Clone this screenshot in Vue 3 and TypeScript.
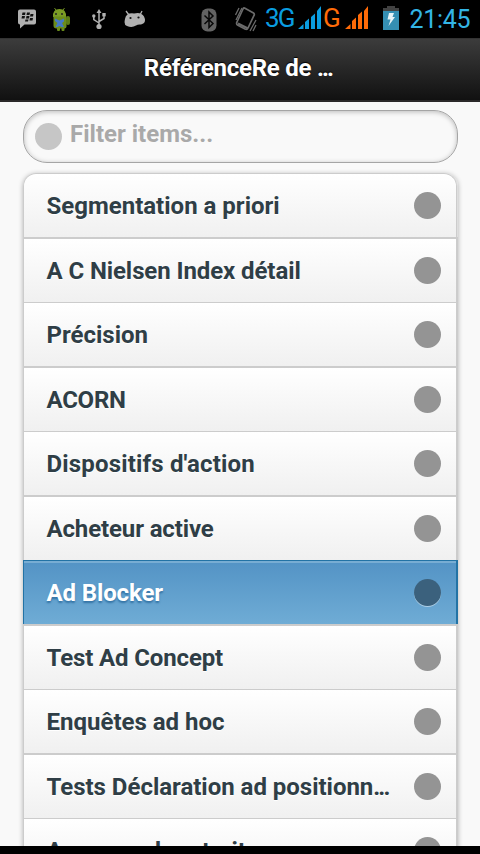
<script setup lang="ts">
interface Item {
  label: string
  tracking: number
  active?: boolean
  clipped?: boolean
}

const items: Item[] = [
  { label: 'Segmentation a priori', tracking: 0 },
  { label: 'A C Nielsen Index détail', tracking: -0.09 },
  { label: 'Précision', tracking: 0 },
  { label: 'ACORN', tracking: -0.25 },
  { label: "Dispositifs d'action", tracking: 0.17 },
  { label: 'Acheteur active', tracking: -0.13 },
  { label: 'Ad Blocker', tracking: -0.12, active: true },
  { label: 'Test Ad Concept', tracking: -0.13 },
  { label: 'Enquêtes ad hoc', tracking: 0 },
  { label: 'Tests Déclaration ad positionn', tracking: -0.02, clipped: true },
  { label: 'Annonce du retrait', tracking: 0 },
]
</script>

<template>
  <div class="screen">
    <div class="status">
      <svg class="ic bbm" width="20" height="20" viewBox="0 0 20 20">
        <path d="M3 0.5h14q2 0 2 2v11q0 2-2 2H7.500L3 19.500v-4q-2 0-2-2v-11q0-2 2-2z" fill="#b0b0b0" />
        <path d="M5.500 3.500h3l-.5 2.500H5zM10 3.500h3l-.5 2.500h-3zM5 7h3l-.5 2.500h-3zM9.500 7h3L12 9.500H9zM13.500 5h3L16 7.500h-3zM8.500 10.500h3L11 12.500H8zM13 9h3l-.5 2.500h-3z" fill="#111" />
      </svg>
      <svg class="ic droid" width="19" height="25" viewBox="0 0 19 25">
        <path d="M2.500 1l2 3M12.500 1l-2 3" stroke="#6d8c20" stroke-width="1" />
        <path d="M1 10Q.5 2 7.500 2T14 10z" fill="#7b9c25" />
        <path d="M1.500 9.500h13v10q0 2-2 2h-8q-3 0-3-3z" fill="#6b8c1c" />
        <rect x="14" y="9" width="4" height="9" rx="2" fill="#5d7c18" />
        <rect x="5" y="19" width="3" height="5" rx="1" fill="#6b8c1c" />
        <rect x="9.500" y="19" width="3" height="5" rx="1" fill="#6b8c1c" />
        <circle cx="4" cy="7" r="1" fill="#222" />
        <circle cx="10" cy="7" r="1" fill="#222" />
        <path d="M3 11.500l4.500 2 4.500-2v3l-2 1.500 2 4H9.500l-2-1-2 1H3.500l2-4-2.500-2z" fill="#4579c5" />
      </svg>
      <svg class="ic usb" width="14" height="21" viewBox="0 0 14 21" fill="none" stroke="#b0b0b0" stroke-width="1.500">
        <path d="M7 3v15M1.800 6v4.500L7 14M12 5v4.500L7 12.500" />
        <path d="M4.500 4L7 0l2.500 4z" fill="#b0b0b0" stroke="none" />
        <circle cx="7" cy="17.500" r="2.600" fill="#b0b0b0" stroke="none" />
        <circle cx="1.800" cy="7" r="1.700" fill="#b0b0b0" stroke="none" />
        <path d="M10.300 4h3.400v3.400h-3.400z" fill="#b0b0b0" stroke="none" />
      </svg>
      <svg class="ic head" width="22" height="18" viewBox="0 0 22 18">
        <path d="M2 1l3 4M18 1l-2 4" stroke="#b0b0b0" stroke-width="1.300" />
        <path d="M1 9Q2 2.500 10 3.500Q17 1.500 20 6.500Q23 13 17 14.500Q14 14 12 15.500Q8 18 3 16Q-.5 15 1 9z" fill="#b0b0b0" />
        <circle cx="6.500" cy="8" r="1.100" fill="#111" />
        <circle cx="14.500" cy="7.500" r="1.100" fill="#111" />
      </svg>
      <svg class="ic bt" width="16" height="24" viewBox="0 0 16 24">
        <rect x=".5" y=".5" width="15" height="23" rx="6" fill="#636363" />
        <path d="M3.500 7.500l8.500 8L8 19.500V4l4 4-8.500 8" fill="none" stroke="#080808" stroke-width="1.500" />
      </svg>
      <svg class="ic vib" width="22" height="26" viewBox="0 0 22 26" fill="none" stroke="#6b6b6b">
        <path d="M9.500 2L18.500 7Q19.800 8 19 9.500L13 22Q12 24 10 23L2.500 19Q1 18 2 16L8 3Q8.500 1.500 9.500 2z" stroke-width="1.700" />
        <path d="M4 2L0.500 9M7 2L1 14M21 14l-6 11M21 19l-3 6" stroke-width="1.300" />
        <path d="M3 17.500l10 5" stroke-width="2" />
      </svg>
      <span class="net three">3G</span>
      <svg class="ic sig1" width="24" height="23" viewBox="0 0 24 23" fill="#0a9de0">
        <path d="M0 23l5.500-5v5zM7 23v-7l4-3.500V23zM13 23V11l4-3.500V23zM19 23V5l4-5v23z" />
      </svg>
      <span class="net edge">G</span>
      <svg class="ic sig2" width="24" height="23" viewBox="0 0 24 23" fill="#ff6b08">
        <path d="M0 23l5.500-5v5zM7 23v-8l4-3.500V23zM13 23V9l4-3.500V23zM19 23V5l4-5v23z" />
      </svg>
      <svg class="ic bat" width="16" height="24" viewBox="0 0 16 24">
        <path d="M4 0h8v2h4v4H0V2h4z" fill="#424242" />
        <path d="M0 5h16v19H0z" fill="#358fb3" />
        <path d="M6 7h5l-1.500 4H12l-6.500 9 2-6.500H4.500z" fill="#e8f3f6" />
      </svg>
      <span class="clock">21:45</span>
    </div>

    <header class="header"><h1>RéférenceRe de <span class="dots">...</span></h1></header>

    <main class="content">
      <div class="search">
        <span class="search-dot"></span>
        <span class="placeholder">Filter items...</span>
      </div>
      <ul class="list">
        <li v-for="item in items" :key="item.label" class="row" :class="{ active: item.active }">
          <span class="label" :style="{ letterSpacing: item.tracking + 'px' }">{{ item.label }}<span v-if="item.clipped" class="dots">...</span></span>
          <span class="dot"></span>
        </li>
      </ul>
    </main>
    <div class="bottom"></div>
  </div>
</template>

<style>
body {
  margin: 0;
  overflow: hidden;
}
</style>

<style scoped>
.screen {
  width: 480px;
  height: 854px;
  display: flex;
  flex-direction: column;
  overflow: hidden;
  background: #f9f9f9;
  font-family: Roboto, sans-serif;
}
.status {
  height: 38px;
  flex: none;
  display: flex;
  align-items: flex-start;
  background: #000;
}
.ic {
  flex: none;
  display: block;
}
.bbm { margin: 9px 0 0 17px; }
.droid { margin: 7px 0 0 15px; }
.usb { margin: 9px 0 0 21px; }
.head { margin: 10px 0 0 18px; }
.bt { margin: 8px 0 0 55px; }
.vib { margin: 6px 0 0 18px; }
.net {
  font-size: 26px;
  line-height: 36px;
  flex: none;
}
.three {
  width: 28px;
  margin-left: 8px;
  color: #0a9de0;
  letter-spacing: -1.800px;
}
.sig1 { margin: 6px 0 0 5px; }
.edge {
  width: 16px;
  margin-left: 1px;
  color: #ff6b08;
}
.sig2 { margin: 6px 0 0 6px; }
.bat { margin: 6px 0 0 14px; }
.clock {
  margin-left: 10.5px;
  font-size: 25px;
  line-height: 40px;
  letter-spacing: -0.3px;
  color: #33b5e5;
  white-space: nowrap;
}
.header {
  height: 64px;
  flex: none;
  box-sizing: border-box;
  border-top: 1px solid #333;
  border-bottom: 2px solid #2b292a;
  background: linear-gradient(#3c3c3c, #111);
  text-align: center;
}
h1 {
  margin: 0;
  padding-right: 4px;
  font-size: 24px;
  line-height: 58px;
  font-weight: 700;
  letter-spacing: -0.24px;
  color: #fff;
  text-shadow: 0 -1px 1px #000;
}
.dots {
  letter-spacing: -1.9px;
}
.content {
  height: 744px;
  flex: none;
  box-sizing: border-box;
  padding: 8px 22px 0 23px;
  overflow: hidden;
}
.search {
  height: 53px;
  box-sizing: border-box;
  display: flex;
  align-items: center;
  padding-left: 10.5px;
  border: 1px solid #a5a5a5;
  border-radius: 24px;
  background: #f9f9f9;
  box-shadow: inset 0 1px 5px rgba(0, 0, 0, 0.25);
}
.search-dot {
  width: 27px;
  height: 27px;
  border-radius: 50%;
  background: #c6c6c6;
}
.placeholder {
  margin: -5px 0 0 8.5px;
  font-size: 24px;
  font-weight: 700;
  color: #a9a9a9;
}
.list {
  list-style: none;
  margin: 10px 0 0;
  padding: 0;
  border-radius: 13px 13px 0 0;
  box-shadow: 0 1px 5px rgba(0, 0, 0, 0.3);
}
.row {
  height: 64px;
  box-sizing: border-box;
  display: flex;
  align-items: center;
  justify-content: space-between;
  padding: 0 15px 0 22.5px;
  border-style: solid;
  border-color: #ccc;
  border-width: 1px 2px 0 1px;
  background: linear-gradient(#fff, #f0f0f0);
  color: #2f3e46;
  text-shadow: 0 1px 0 #fff;
}
.row:nth-child(even) {
  height: 65px;
  border-top-width: 2px;
}
.row:first-child {
  margin-right: 1px;
  border-radius: 13px 13px 0 0;
  border-right-width: 1px;
  box-shadow: 1px 0 0 #dedede;
}
.label {
  white-space: nowrap;
  font-size: 24px;
  line-height: 32px;
  font-weight: 700;
}
.dot {
  width: 27px;
  height: 27px;
  flex: none;
  border-radius: 50%;
  background: #949494;
}
.active {
  border-color: #2373a5;
  background: linear-gradient(#5393c5, #6facd5);
  box-shadow: inset 0 2px 0 #78add3;
  color: #fff;
  text-shadow: 0 2px 2px #3373a5;
}
.active .dot {
  background: #3b617d;
  box-shadow: 0 1px 0 rgba(255, 255, 255, 0.45);
}
.bottom {
  flex: 1;
  background: #000;
}
</style>
